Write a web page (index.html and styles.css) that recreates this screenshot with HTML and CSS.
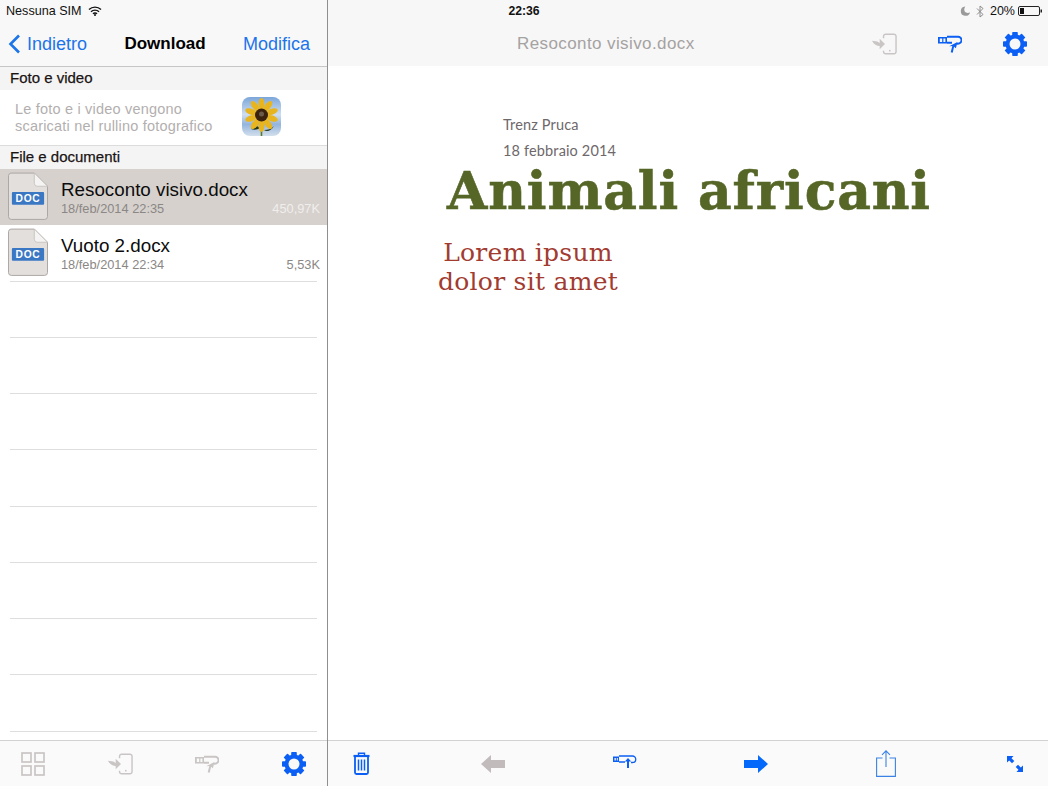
FILE: index.html
```html
<!DOCTYPE html>
<html lang="it">
<head>
<meta charset="utf-8">
<title>Download</title>
<link rel="stylesheet" href="styles.css">
</head>
<body>
<svg class="defs" aria-hidden="true">
  <symbol id="gear" viewBox="0 0 24 24">
    <g fill="currentColor">
      <rect x="9.200" y="0" width="5.600" height="24" rx="0.800"/>
      <rect x="9.200" y="0" width="5.600" height="24" rx="0.800" transform="rotate(45 12 12)"/>
      <rect x="9.200" y="0" width="5.600" height="24" rx="0.800" transform="rotate(90 12 12)"/>
      <rect x="9.200" y="0" width="5.600" height="24" rx="0.800" transform="rotate(135 12 12)"/>
    </g>
    <circle cx="12" cy="12" r="7.500" fill="none" stroke="currentColor" stroke-width="4"/>
    <circle cx="12" cy="12" r="5.500" fill="#f8f8f8"/>
  </symbol>
  <symbol id="enter" viewBox="0 0 26 22">
    <path d="M12 5V3a2.200 2.200 0 0 1 2.200-2.200h8.600A2.200 2.200 0 0 1 25 3v16a2.200 2.200 0 0 1-2.200 2.200h-8.600A2.200 2.200 0 0 1 12 19v-1" fill="none" stroke="currentColor" stroke-width="1.500"/>
    <path d="M0 7.500l5.500 1 2.500 1.500V5.500l5.500 5.500L8 16.500V13c-3 0-6-1.500-8-5.500z" fill="currentColor"/>
    <circle cx="18.500" cy="18" r="0.900" fill="currentColor"/>
  </symbol>
  <symbol id="pointer" viewBox="0 0 24 18">
    <path d="M0 2h9v6.500H0z M1.800 3.600v3.300h2.400V3.600z M5.400 3.600v3.300h2V3.600z" fill="currentColor" fill-rule="evenodd"/>
    <path d="M9 1.700h11a3.500 3.500 0 0 1 0 7h-1.500 M9 7.800h5" fill="none" stroke="currentColor" stroke-width="1.900"/>
    <path d="M19.500 7l-1.600 6.200-1.800-1.500-1.400 6-2-.5 1.600-6.100-3.100.1z" fill="currentColor"/>
  </symbol>
</svg>

<div class="statusbar">
  <div class="status-left">
    <span>Nessuna SIM</span>
    <svg class="wifi" viewBox="0 0 14 10"><path d="M1 3.600a8.600 8.600 0 0 1 12 0M3 5.800a5.600 5.600 0 0 1 8 0M5 7.800a2.800 2.800 0 0 1 4 0" fill="none" stroke="#111" stroke-width="1.400"/><circle cx="7" cy="9" r="1" fill="#111"/></svg>
  </div>
  <div class="status-time">22:36</div>
  <div class="status-right">
    <svg class="moon" viewBox="0 0 10 10"><path d="M6 .5A4.700 4.700 0 1 0 9.800 7 5 5 0 0 1 6 .5z" fill="#9a9a9a" transform="rotate(-10 5 5)"/><circle cx="7.600" cy="3.600" r="3.300" fill="#f8f8f8"/></svg>
    <svg class="bt" viewBox="0 0 8 13"><path d="M1 3.500l6 6L4 12V1l3 2.500-6 6" fill="none" stroke="#8c8c8c" stroke-width="1"/></svg>
    <span>20%</span>
    <svg class="battery" viewBox="0 0 24 10"><rect x=".5" y=".5" width="21" height="9" rx="1.500" fill="none" stroke="#222" stroke-width="1"/><rect x="2" y="2" width="4" height="6" fill="#111"/><rect x="22.500" y="3.500" width="1.500" height="3" fill="#222"/></svg>
  </div>
</div>

<div class="app">
  <aside class="sidebar">
    <header class="nav">
      <a class="back">
        <svg class="chevron" viewBox="0 0 12 20"><path d="M10.500 1.500L2 10l8.500 8.500" fill="none" stroke="currentColor" stroke-width="2.600"/></svg>
        Indietro
      </a>
      <h1 class="nav-title">Download</h1>
      <a class="edit">Modifica</a>
    </header>

    <div class="section section-photos">Foto e video</div>
    <div class="photos">
      <p class="photos-text">Le foto e i video vengono<br>scaricati nel rullino fotografico</p>
      <svg class="sunflower" viewBox="0 0 39 39">
        <defs>
          <linearGradient id="sky" x1="0" y1="0" x2="0" y2="1">
            <stop offset="0" stop-color="#7ba6da"/><stop offset=".45" stop-color="#cfdeef"/><stop offset=".7" stop-color="#94b5dd"/><stop offset="1" stop-color="#d3dfec"/>
          </linearGradient>
          <clipPath id="round"><rect width="39" height="39" rx="8"/></clipPath>
        </defs>
        <g clip-path="url(#round)">
          <rect width="39" height="39" fill="url(#sky)"/>
          <path d="M19.500 22v17" stroke="#5a7a2a" stroke-width="1.600"/>
          <path d="M18 31c-3-3-6-2-9 1 3 1 6 1 9-1zM22 33c3 2 7 1 10-4-3 3-6 4-10 4z" fill="#24351a"/>
          <g fill="#e9b51f">
            <ellipse cx="19.500" cy="7" rx="3" ry="6"/>
            <ellipse cx="19.500" cy="7" rx="3" ry="6" transform="rotate(36 19.500 18)"/>
            <ellipse cx="19.500" cy="7" rx="3" ry="6" transform="rotate(72 19.500 18)"/>
            <ellipse cx="19.500" cy="7" rx="3" ry="6" transform="rotate(108 19.500 18)"/>
            <ellipse cx="19.500" cy="7" rx="3" ry="6" transform="rotate(144 19.500 18)"/>
            <ellipse cx="19.500" cy="7" rx="3" ry="6" transform="rotate(180 19.500 18)"/>
            <ellipse cx="19.500" cy="7" rx="3" ry="6" transform="rotate(216 19.500 18)"/>
            <ellipse cx="19.500" cy="7" rx="3" ry="6" transform="rotate(252 19.500 18)"/>
            <ellipse cx="19.500" cy="7" rx="3" ry="6" transform="rotate(288 19.500 18)"/>
            <ellipse cx="19.500" cy="7" rx="3" ry="6" transform="rotate(324 19.500 18)"/>
          </g>
          <circle cx="19.500" cy="18" r="6.500" fill="#3a220f"/>
          <circle cx="19.500" cy="17" r="2.500" fill="#6b5a48"/>
        </g>
      </svg>
    </div>

    <div class="section section-files">File e documenti</div>
    <ul class="files">
      <li class="file file-selected">
        <svg class="doc" viewBox="0 0 41 49">
          <path d="M3 .5h24L40.500 14v31a3 3 0 0 1-3 3h-34a3 3 0 0 1-3-3V3A3 3 0 0 1 3 .5z" fill="#e3dfdc" stroke="#aaa6a3"/>
          <path d="M27 .5V11a3 3 0 0 0 3 3h10.500z" fill="#f5f4f3" stroke="#c0bdba" stroke-width=".8"/>
          <rect x="4" y="20" width="33" height="13" rx="1" fill="#3b78c4"/>
          <text x="20.500" y="30.200" text-anchor="middle" class="doc-label">DOC</text>
        </svg>
        <div class="file-info">
          <div class="file-name">Resoconto visivo.docx</div>
          <div class="file-meta"><span>18/feb/2014 22:35</span><span class="size">450,97K</span></div>
        </div>
      </li>
      <li class="file">
        <svg class="doc" viewBox="0 0 41 49">
          <path d="M3 .5h24L40.500 14v31a3 3 0 0 1-3 3h-34a3 3 0 0 1-3-3V3A3 3 0 0 1 3 .5z" fill="#e3dfdc" stroke="#aaa6a3"/>
          <path d="M27 .5V11a3 3 0 0 0 3 3h10.500z" fill="#f5f4f3" stroke="#c0bdba" stroke-width=".8"/>
          <rect x="4" y="20" width="33" height="13" rx="1" fill="#3b78c4"/>
          <text x="20.500" y="30.200" text-anchor="middle" class="doc-label">DOC</text>
        </svg>
        <div class="file-info">
          <div class="file-name">Vuoto 2.docx</div>
          <div class="file-meta"><span>18/feb/2014 22:34</span><span class="size">5,53K</span></div>
        </div>
      </li>
      <li class="file file-empty"></li>
      <li class="file file-empty"></li>
      <li class="file file-empty"></li>
      <li class="file file-empty"></li>
      <li class="file file-empty"></li>
      <li class="file file-empty"></li>
      <li class="file file-empty"></li>
      <li class="file file-empty"></li>
    </ul>

    <footer class="toolbar">
      <span class="tool muted">
        <svg class="ic-grid" viewBox="0 0 24 24"><g fill="none" stroke="currentColor" stroke-width="1.700"><rect x="1" y="1" width="9" height="9"/><rect x="14" y="1" width="9" height="9"/><rect x="1" y="14" width="9" height="9"/><rect x="14" y="14" width="9" height="9"/></g></svg>
      </span>
      <span class="tool muted"><svg class="ic-enter"><use href="#enter"/></svg></span>
      <span class="tool muted"><svg class="ic-pointer"><use href="#pointer"/></svg></span>
      <span class="tool blue"><svg class="ic-gear"><use href="#gear"/></svg></span>
    </footer>
  </aside>

  <main class="viewer">
    <header class="viewer-nav">
      <div class="viewer-title">Resoconto visivo.docx</div>
      <div class="viewer-actions">
        <span class="tool muted"><svg class="ic-enter"><use href="#enter"/></svg></span>
        <span class="tool blue"><svg class="ic-pointer"><use href="#pointer"/></svg></span>
        <span class="tool blue"><svg class="ic-gear"><use href="#gear"/></svg></span>
      </div>
    </header>

    <article class="document">
      <p class="doc-author">Trenz Pruca</p>
      <p class="doc-date">18 febbraio 2014</p>
      <h2 class="doc-title">Animali africani</h2>
      <p class="doc-sub">Lorem ipsum<br>dolor sit amet</p>
    </article>

    <footer class="toolbar toolbar-doc">
      <span class="tool blue">
        <svg class="ic-trash" viewBox="0 0 17 23"><g fill="none" stroke="currentColor"><path d="M5.500 3V1.200h6V3" stroke-width="1.400"/><path d="M.5 4h16" stroke-width="2.200"/><path d="M2 5v15.500A1.500 1.500 0 0 0 3.500 22h10a1.500 1.500 0 0 0 1.500-1.500V5" stroke-width="1.800"/><path d="M5.500 7.500v11M8.500 7.500v11M11.500 7.500v11" stroke-width="1.500"/></g></svg>
      </span>
      <span class="tool muted-dark">
        <svg class="ic-arrow" viewBox="0 0 24 18"><path d="M0 9L10 0v5h14v8H10v5z" fill="currentColor"/></svg>
      </span>
      <span class="tool blue">
        <svg class="ic-pointer-small" viewBox="0 0 24 14"><path d="M0 1.500h6v5.500H0z M1.500 3v2.500h1.300V3z M3.800 3v2.500h1V3z" fill="currentColor" fill-rule="evenodd"/><path d="M6 1h13.500a3.200 3.200 0 0 1 0 6.500H18M6 7h6" fill="none" stroke="currentColor" stroke-width="1.300"/><path d="M15 3l3.200 3.500h-2.200V13h-2V6.500h-2.200z" fill="currentColor"/></svg>
      </span>
      <span class="tool blue-strong">
        <svg class="ic-arrow" viewBox="0 0 24 18"><path d="M24 9L14 0v5H0v8h14v5z" fill="currentColor"/></svg>
      </span>
      <span class="tool share">
        <svg class="ic-share" viewBox="0 0 20 27"><g fill="none" stroke="currentColor" stroke-width="1.100"><path d="M6.500 8H.6v18.400h18.800V8h-5.900"/><path d="M10 1v16M6 4.800L10 .8l4 4"/></g></svg>
      </span>
      <span class="tool blue">
        <svg class="ic-expand" viewBox="0 0 16 16"><path d="M0 0h6.500L4.500 2.200 7.300 5 5 7.300 2.200 4.500 0 6.500zM16 16H9.500l2-2.200L8.700 11 11 8.700l2.800 2.800L16 9.500z" fill="currentColor"/></svg>
      </span>
    </footer>
  </main>
</div>
</body>
</html>
```
FILE: styles.css
```css
* { box-sizing: border-box; }
html, body { margin: 0; padding: 0; }
body {
  width: 1048px;
  height: 786px;
  overflow: hidden;
  position: relative;
  background: #fff;
  font-family: "Liberation Sans", Arial, sans-serif;
  color: #000;
}
.defs { display: none; }

/* Status bar lies over both navigation bars */
.statusbar {
  position: absolute;
  top: 0;
  left: 0;
  right: 0;
  height: 22px;
  padding: 0 6px;
  display: grid;
  grid-template-columns: 1fr auto 1fr;
  align-items: center;
  font-size: 12.600px;
  color: #111;
}
.status-left { display: flex; align-items: center; gap: 6px; }
.status-time { font-weight: 700; font-size: 12.200px; }
.status-right { display: flex; align-items: center; justify-content: flex-end; gap: 4px; font-size: 12.500px; }
.wifi { width: 14px; height: 10px; }
.moon { width: 10px; height: 10px; margin-right: 2px; }
.bt { width: 8px; height: 13px; margin-right: 2px; }
.battery { width: 24px; height: 10px; margin-left: -1px; }

.app { display: flex; height: 786px; }

.sidebar {
  width: 328px;
  flex: none;
  display: flex;
  flex-direction: column;
  border-right: 1px solid #8f8f8f;
}
.nav {
  height: 67px;
  padding: 22px 17px 0 8px;
  background: #f8f8f8;
  border-bottom: 1px solid #c6c6c6;
  display: flex;
  align-items: center;
  justify-content: space-between;
  font-size: 18px;
}
.back, .edit { color: #1c74ea; display: flex; align-items: center; }
.chevron { width: 13px; height: 20px; margin-right: 6px; }
.nav-title { margin: 0; font-size: 17px; font-weight: 700; }

.section {
  height: 23px;
  padding-left: 10px;
  display: flex;
  align-items: center;
  background: #f5f4f4;
  font-size: 15px;
  font-weight: 400;
  color: #1a1414;
  -webkit-text-stroke: 0.25px #1a1414;
}
.section-photos { padding-bottom: 3px; }
.section-files { height: 24px; padding-bottom: 2px; border-top: 1px solid #dcdcdc; }

.photos {
  height: 55px;
  padding: 7px 0 0 15px;
  display: flex;
  align-items: flex-start;
  background: #fff;
}
.photos-text {
  width: 227px;
  margin: 4px 0 0;
  font-size: 14.500px;
  line-height: 17px;
  color: #b3afaf;
  letter-spacing: 0.2px;
  white-space: nowrap;
}
.sunflower { width: 39px; height: 39px; flex: none; }

.files { list-style: none; margin: 0; padding: 0; flex: 1; overflow: hidden; }
.file {
  height: 56.250px;
  padding: 3px 7px 0 8px;
  display: flex;
  position: relative;
}
.file::after {
  content: "";
  position: absolute;
  left: 10px;
  right: 10px;
  bottom: 0;
  height: 1px;
  background: #dedede;
}
.file-selected { background: #d6d1cd; }
.file-selected::after { display: none; }
.doc { width: 40px; height: 49px; flex: none; }
.doc-label {
  font-family: "Liberation Sans", Arial, sans-serif;
  font-size: 10.500px;
  font-weight: 700;
  letter-spacing: 0.7px;
  fill: #fff;
}
.file-info { flex: 1; margin-left: 13px; }
.file-name { font-size: 18.800px; line-height: 21px; margin-top: 7px; color: #0c0c0c; }
.file-meta {
  display: flex;
  justify-content: space-between;
  font-size: 12.800px;
  line-height: 14px;
  margin-top: 2px;
  color: #8b8785;
}
.size { color: #8b8785; }
.file-selected .size { color: #f0eeec; }

.toolbar {
  height: 46px;
  flex: none;
  padding: 0 13px;
  display: flex;
  align-items: center;
  justify-content: space-between;
  background: #fafafa;
  border-top: 1px solid #d2d2d2;
}
.toolbar-doc {
  display: grid;
  grid-template-columns: 132px 132px 131px 130px 129px 40px;
  justify-content: start;
}

.tool { width: 40px; display: flex; align-items: center; justify-content: center; }
.muted { color: #c9c5c4; }
.muted-dark { color: #c1bbbb; }
.blue { color: #0b5ff4; }
.blue-strong { color: #0468fb; }
.share { color: #3b82e6; }

.ic-grid { width: 24px; height: 24px; }
.ic-enter { width: 25px; height: 22px; }
.ic-pointer { width: 24px; height: 18px; }
.ic-gear { width: 24px; height: 24px; }
.ic-trash { width: 17px; height: 23px; }
.ic-arrow { width: 24px; height: 18px; }
.ic-pointer-small { width: 24px; height: 14px; margin-top: -3px; }
.ic-share { width: 20px; height: 27px; }
.ic-expand { width: 16px; height: 16px; }

.viewer { flex: 1; display: flex; flex-direction: column; min-width: 0; }
.viewer-nav {
  height: 66px;
  flex: none;
  padding: 22px 13px 0 189px;
  background: #f7f7f7;
  display: flex;
  align-items: center;
  justify-content: space-between;
}
.viewer-title { font-size: 17px; color: #a5a2a2; letter-spacing: 0.4px; }
.viewer-actions { display: flex; gap: 25.500px; }
.viewer-nav .tool { height: 24px; }

.document { flex: 1; padding-top: 50px; overflow: hidden; }
.doc-author, .doc-date {
  margin: 0 0 0 175px;
  font-family: Lato, sans-serif;
  font-size: 14.500px;
  line-height: 18px;
  letter-spacing: 0.15px;
  color: #6e686b;
  white-space: nowrap;
}
.doc-date { margin-top: 8px; }
.doc-title {
  margin: 8px 0 0 119px;
  font-family: "DejaVu Serif", serif;
  font-weight: 700;
  font-size: 52px;
  line-height: 46px;
  letter-spacing: 0.85px;
  color: #556627;
  -webkit-text-stroke: 0.6px #556627;
  white-space: nowrap;
}
.doc-sub {
  width: 180px;
  margin: 24px 0 0 110px;
  font-family: "DejaVu Serif", serif;
  font-size: 25px;
  line-height: 29px;
  letter-spacing: 0.27px;
  text-align: center;
  color: #a23b30;
  white-space: nowrap;
}
```
